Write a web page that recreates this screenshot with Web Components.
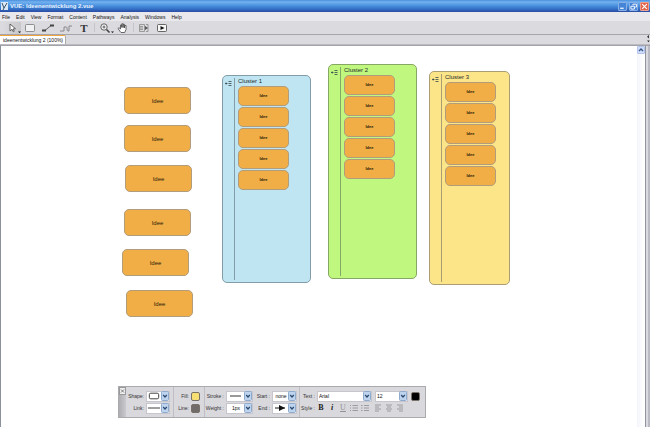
<!DOCTYPE html>
<html lang="de">
<head>
<meta charset="utf-8">
<title>VUE: Ideenentwicklung 2.vue</title>
<style>
html,body{margin:0;height:100%}
body{font:5px/8px "Liberation Sans",Arial,sans-serif;color:#222;background:#fff}
vue-node,vue-cluster{position:absolute}
vue-palette{position:absolute;left:117px;top:340px}
</style>
</head>
<body>
<vue-app>
  <vue-titlebar slot="head">VUE: Ideenentwicklung 2.vue</vue-titlebar>
  <vue-menubar slot="head"></vue-menubar>
  <vue-toolbar slot="head"></vue-toolbar>
  <vue-tabs slot="head">ideenentwicklung 2 (100%)</vue-tabs>
  <vue-node style="left:123px;top:41px">Idee</vue-node>
  <vue-node style="left:123px;top:79px">Idee</vue-node>
  <vue-node style="left:124px;top:119px">Idee</vue-node>
  <vue-node style="left:123px;top:163px">Idee</vue-node>
  <vue-node style="left:121px;top:203px">Idee</vue-node>
  <vue-node style="left:125px;top:244px">Idee</vue-node>
  <vue-cluster name="Cluster 1" style="left:221px;top:29px;--w:89px;--h:208px;--fill:#bee5f1;--edge:#829ca8"></vue-cluster>
  <vue-cluster name="Cluster 2" style="left:327px;top:18px;--w:89px;--h:215px;--fill:#c0f77f;--edge:#87a765"></vue-cluster>
  <vue-cluster name="Cluster 3" style="left:428px;top:25px;--w:81px;--h:214px;--fill:#fce588;--edge:#aa9d74"></vue-cluster>
  <vue-palette></vue-palette>
</vue-app>
<script>
const define = (name, html) => customElements.define(name, class extends HTMLElement {
  constructor() {
    super();
    const t = document.createElement('template');
    t.innerHTML = html.replace(/\{(\w+)\}/g, (m, k) => this.getAttribute(k) || '');
    this.attachShadow({mode: 'open'}).append(t.content.cloneNode(true));
  }
});

define('vue-app', `<style>
:host{display:flex;flex-direction:column;min-height:100vh}
.work{flex:1;display:flex;min-height:380px;border-left:1px solid #8a9199;border-top:1px solid #a3a3ab;box-sizing:border-box}
.canvas{position:relative;flex:1;background:#fff}
.scroll{width:8px;background:linear-gradient(90deg,#f4f5fb,#fff);box-sizing:border-box}
.scroll button{display:block;width:8px;height:8px;padding:0;border:1px solid #b3c5ee;border-radius:1px;background:#cddcfa}
.scroll svg{display:block;width:6px;height:6px}
.rail{width:5px;background:linear-gradient(90deg,#8f939b 1px,#d9dadf 1px 3px,#b9bac2 3px)}
</style><slot name="head"></slot>
<div class="work"><main class="canvas"><slot></slot></main>
<div class="scroll"><button aria-label="Scroll up"><svg viewBox="0 0 6 6"><path d="M1 4l2-2 2 2" fill="none" stroke="#3c5484" stroke-width="1.3"/></svg></button></div><div class="rail"></div></div>`);

define('vue-titlebar', `<style>
:host{display:flex;align-items:center;height:12px;gap:2px;padding:0 1px;background:linear-gradient(#4a8edc 0,#74b2f0 2px,#5096e1 5px,#397ccf 8px,#2c56b0 11px,#2c4c9b 12px);color:#fff;font-size:6px;font-weight:bold}
.t{flex:1;color:#e6f1ff}
.i{width:7px;height:8px;background:#dce8f4}
button{width:9px;height:9px;padding:0;border:1px solid #86b0e6;border-radius:1px;background:#4684d8}
button svg{display:block;width:7px;height:7px;fill:none;stroke:#fff}
.x{background:#e0644a;border-color:#efa08e}
</style><svg class="i" viewBox="0 0 7 8"><path d="M1 1l2 5L6 1M3 6l-1 2" fill="none" stroke="#37526e"/></svg><span class="t"><slot></slot></span>
<button aria-label="Minimize"><svg viewBox="0 0 6 6"><path d="M1 4.5h3"/></svg></button>
<button aria-label="Restore"><svg viewBox="0 0 6 6"><path d="M2.500 2V1h3v2.500h-1M.8 2.800h3v2.400h-3z" stroke-width=".8"/></svg></button>
<button class="x" aria-label="Close"><svg viewBox="0 0 6 6"><path d="M1 1l4 4M5 1L1 5"/></svg></button>`);

define('vue-menubar', `<style>
:host{display:flex;align-items:center;height:9px;background:#e9e8ec;padding:0 2px}
nav{display:flex;gap:6px}
button{border:0;background:none;padding:0;font:inherit;color:#111}
</style><nav>${['File','Edit','View','Format','Content','Pathways','Analysis','Windows','Help'].map(m => `<button>${m}</button>`).join('')}</nav>`);

const tool = (label, art, cls = '') => `<button class="${cls}" aria-label="${label}"><svg viewBox="0 0 18 12">${art}</svg></button>`;
const corner = '<path d="M15 9.500h3l-1.500 1.500z" fill="#111" stroke="none"/>';
define('vue-toolbar', `<style>
:host{display:flex;align-items:center;height:13px;background:#dadadf;padding:0 3px;border-bottom:1px solid #a5a5ab}
button{width:18px;height:12px;padding:0;border:0;background:none}
button.on{background:linear-gradient(90deg,#dadadf,#c8c8ca)}
button.type{font:bold 11px/12px "Liberation Serif",serif;color:#333}
svg{display:block;width:18px;height:12px;fill:none;stroke:#444;stroke-width:.8}
i{width:1px;height:9px;margin:0 1px;background:#c5c5cb}
</style>${tool('Select','<path d="M7 2v7l2-1.700 1.300 2.500 1-.600L10 7l2.500-.300z" fill="#fff"/>'+corner,'on')}
${tool('Node','<rect x="4.500" y="2.500" width="9" height="7" rx="1" fill="#f1f1f3" stroke="#777"/>')}
${tool('Link','<path d="M6 8.500l6-5"/><path d="M3 8.500h4M11 3.500h4" stroke-width="1.800"/>')}
${tool('Pathway','<path d="M3 9h4V5h2.500c1 0 0 4 1.500 4h1V4h3" stroke="#777"/>')}
<button class="type" aria-label="Text">T</button><i></i>
${tool('Zoom','<circle cx="8" cy="5" r="3.200" fill="#f3f3f5"/><path d="M10.500 7.500l3 3" stroke-width="1.600"/><path d="M6.500 5h3M8 3.500v3"/>'+corner)}
${tool('Pan','<path d="M6.500 10L4 6.500l1-.800 1.500 1.300V3h1.300v2.500V1.800h1.300v3.700V2.300h1.300V6l.3-2.500h1.300v4L10.700 10.500H7z" fill="#fff"/>')}<i></i>
${tool('Content','<path d="M4.500 2.500h5v7h-5zM11 2.500h2v7h-2M5 4.500h3M5 6h3M5 7.500h3" stroke="#888"/><path d="M10 4l3 2-3 2z" fill="#555" stroke="none"/>')}
${tool('Presentation','<rect x="4.500" y="2.500" width="9" height="7" rx="1" fill="#f6f6f6"/><path d="M7.500 4l4 2-4 2z" fill="#111" stroke="none"/>')}`);

define('vue-tabs', `<style>
:host{display:flex;height:9px;background:#dadadf;border-bottom:1px solid #bbbbc1}
button{border:0;border-top:1px solid #f0a23c;border-right:1px solid #aaa;background:#fff;padding:0 2px 0 3px;font:inherit;color:#111;border-radius:0 2px 0 0}
span{flex:1}
svg{width:4px;height:9px;fill:#222}
</style><button><slot></slot></button><span></span><svg viewBox="0 0 4 10"><path d="M3 0v4L1 2zM1 6h3L2.500 8z"/></svg>`);

define('vue-node', `<style>
:host{display:flex;align-items:center;justify-content:center;box-sizing:border-box;width:var(--nw,67px);height:var(--nh,27px);background:#f2ae46;border:1px solid #b19c7b;border-radius:5px;color:#2a1d08;font-size:var(--nf,6px);font-weight:var(--nb,normal)}
</style><slot></slot>`);

define('vue-cluster', `<style>
:host{display:flex;box-sizing:border-box;width:var(--w);height:var(--h);background:var(--fill);border:1px solid var(--edge);border-radius:5px;--nw:51px;--nh:20px;--nf:4px;--nb:bold}
.side{width:11px;border-right:1px solid var(--edge);margin:2px 0;display:flex;justify-content:center}
.side svg{width:7px;height:7px;margin-top:2px}
.body{padding:1px 0 0 3px;display:flex;flex-direction:column;gap:1px;color:#1d2a2a}
h2{margin:0;font:6px/8px "Liberation Sans",Arial,sans-serif}
</style><div class="side"><svg viewBox="0 0 7 7"><path d="M0 3.500h2.500M1.200 2.500v2M3.500 1.500h3M3.500 3.500h3M3.500 5.500h3" fill="none" stroke="#34474a" stroke-width=".8"/></svg></div>
<div class="body"><h2>{name}</h2>${'<vue-node>Idee</vue-node>'.repeat(5)}</div>`);

define('vue-field', `<style>
:host{display:grid;grid-template-columns:var(--label,16px) auto;gap:2px;align-items:center;height:12px}
span{display:flex;justify-content:flex-end;white-space:nowrap}
div{display:flex;gap:3px;align-items:center}
</style><span>{label}</span><div><slot></slot></div>`);

const drop = `<svg class="d" viewBox="0 0 8 10"><rect x=".5" y=".5" width="7" height="9" rx="1" fill="#bdd3ee" stroke="#8eabcd"/><path d="M2.200 4l1.800 2 1.800-2" fill="none" stroke="#29486e" stroke-width="1.200"/></svg>`;
const pick = (label, art) => `<button class="pick" aria-label="${label}"><svg viewBox="0 0 15 10">${art}</svg>${drop}</button>`;
const combo = (label, value, cls) => `<label class="combo ${cls}"><select aria-label="${label}"><option>${value}</option></select>${drop}</label>`;
const fmt = (label, body, cls = '') => `<button class="f ${cls}" aria-label="${label}">${body}</button>`;
const art = d => `<svg viewBox="0 0 8 8"><path d="${d}" fill="none" stroke="#8d8d92" stroke-width=".8"/></svg>`;
define('vue-palette', `<style>
:host{display:flex;box-sizing:border-box;height:32px;border:1px solid #a9a9ae;background:#d9d8dc;color:#333}
.grip{width:7px;background:linear-gradient(90deg,#aeaeb2,#c9c9ce)}
.grip button{display:block;width:7px;height:8px;padding:0;border:1px solid #999;background:#eee}
.grip svg{display:block;width:5px;height:6px}
section{display:flex;flex-direction:column;justify-content:center;padding:0 3px 0 2px;border-right:1px solid #bfbec4}
.s2{padding-right:4px;--label:13px}
.s3{padding-right:2px;border:0;--cw:27px;--label:17px}
.s4{padding-right:2px;--cw:25px;--label:13px}
.s5{padding-right:5px;border:0;--label:13px}
.pick,.combo{display:flex;align-items:center;box-sizing:border-box;height:11px;width:var(--cw,24px);padding:0;border:1px solid #c6c6cc;background:#fff}
.pick>svg:first-child{flex:1;min-width:0;height:10px}
.d{width:8px;height:10px;flex:none;pointer-events:none}
select{appearance:none;flex:1;min-width:0;width:0;border:0;background:none;padding:0 0 0 1px;font:inherit;color:#111;outline:0;height:9px}
.mid select{text-align:center;text-align-last:center}
.font{width:55px}.size{width:33px}
.sw{width:9px;height:9px;padding:0;border:1px solid #77716a;border-radius:2px;background:var(--c)}
.f{width:8px;height:10px;padding:0;border:0;background:none;font:8px/10px "Liberation Serif",serif;color:#222;text-align:center}
.f svg{display:block;width:8px;height:8px}
.group{margin-left:2px}
.g{color:#919196;text-decoration:underline}
</style>
<div class="grip"><button aria-label="Close"><svg viewBox="0 0 5 6"><path d="M1 1.500l3 3M4 1.500l-3 3" stroke="#555" stroke-width=".7"/></svg></button></div>
<section>
<vue-field label="Shape:">${pick('Shape','<rect x="2.500" y="2" width="10" height="6" rx="1.500" fill="#fff" stroke="#333"/>')}</vue-field>
<vue-field label="Link:">${pick('Link','<path d="M1 5h13" stroke="#333"/>')}</vue-field></section>
<section class="s2">
<vue-field label="Fill:"><button class="sw" style="--c:#f8df74" aria-label="Fill"></button></vue-field>
<vue-field label="Line:"><button class="sw" style="--c:#716b69" aria-label="Line"></button></vue-field></section>
<section class="s3">
<vue-field label="Stroke :">${pick('Stroke','<path d="M2 5h11" stroke="#333"/>')}</vue-field>
<vue-field label="Weight :">${combo('Weight','1px','mid')}</vue-field></section>
<section class="s4">
<vue-field label="Start :">${combo('Start','none','mid')}</vue-field>
<vue-field label="End :">${pick('End','<path d="M2 5h10" stroke="#111"/><path d="M6 2l6 3-6 3z" fill="#111"/>')}</vue-field></section>
<section class="s5">
<vue-field label="Text :">${combo('Font','Arial','font')}${combo('Size','12','size')}<button class="sw" style="--c:#000" aria-label="Text color"></button></vue-field>
<vue-field label="Style :">${fmt('Bold','<b>B</b>')}${fmt('Italic','<b><em>i</em></b>')}${fmt('Underline','<span class="g">U</span>')}${fmt('Numbered list',art('M0 1.500h1M2.500 1.500h5.500M0 4h1M2.500 4h5.500M0 6.500h1M2.500 6.500h5.500'))}${fmt('Bullet list',art('M0 1.500h1.500M3 1.500h5M0 4h1.500M3 4h5M0 6.500h1.500M3 6.500h5'))}${fmt('Align left',art('M1 1h6M1 3h4M1 5h6M1 7h4'),'group')}${fmt('Align center',art('M1 1h6M2 3h4M1 5h6M2 7h4'))}${fmt('Align right',art('M1 1h6M3 3h4M1 5h6M3 7h4'))}</vue-field></section>`);
</script>
</body>
</html>
